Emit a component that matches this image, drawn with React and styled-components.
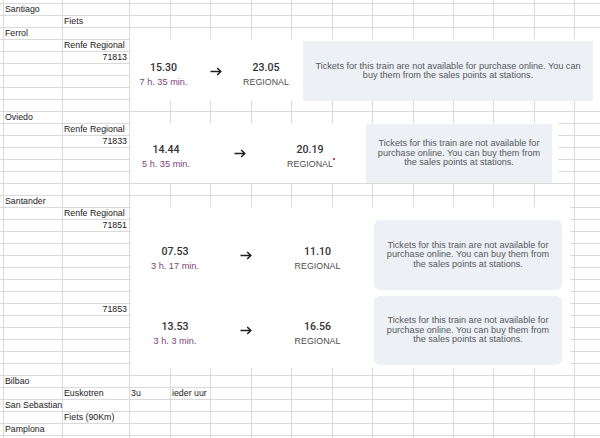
import React from 'react';
import styled, { createGlobalStyle } from 'styled-components';

const GlobalStyle = createGlobalStyle`
  html, body { margin: 0; padding: 0; background: #ffffff; }
  body { width: 600px; height: 438px; overflow: hidden; }
`;

const COLS = [4, 59, 67, 41, 40, 41, 40, 41, 40, 41, 40, 40, 41, 40, 41];
const ROWS = 38;

const CELLS = [
  { r: 0, c: 1, t: 'Santiago' },
  { r: 1, c: 2, t: 'Fiets' },
  { r: 2, c: 1, t: 'Ferrol' },
  { r: 3, c: 2, t: 'Renfe Regional' },
  { r: 4, c: 2, t: '71813', right: true },
  { r: 9, c: 1, t: 'Oviedo' },
  { r: 10, c: 2, t: 'Renfe Regional' },
  { r: 11, c: 2, t: '71833', right: true },
  { r: 16, c: 1, t: 'Santander' },
  { r: 17, c: 2, t: 'Renfe Regional' },
  { r: 18, c: 2, t: '71851', right: true },
  { r: 25, c: 2, t: '71853', right: true },
  { r: 31, c: 1, t: 'Bilbao' },
  { r: 32, c: 2, t: 'Euskotren' },
  { r: 32, c: 3, t: '3u' },
  { r: 32, c: 4, t: 'ieder uur' },
  { r: 33, c: 1, t: 'San Sebastian' },
  { r: 34, c: 2, t: 'Fiets (90Km)' },
  { r: 35, c: 1, t: 'Pamplona' },
];

const NOTICE =
  'Tickets for this train are not available for purchase online. You can buy them from the sales points at stations.';

const PASTES = [
  {
    x: 130, y: 39, w: 470, h: 62, pt: 2,
    cols: [67, 38, 62], ml: 6, cw: 290, r: 1,
    trains: [{ h: 60, dep: '15.30', dur: '7 h. 35 min.', arr: '23.05' }],
  },
  {
    x: 130, y: 123, w: 428, h: 60, pt: 1,
    cols: [72, 76, 64], ml: 24, cw: 186, r: 1,
    trains: [{ h: 59, dep: '14.44', dur: '5 h. 35 min.', arr: '20.19', mark: true }],
  },
  {
    x: 131, y: 207, w: 439, h: 161, pt: 13,
    cols: [88, 54, 89], ml: 12, cw: 188, r: 6,
    trains: [
      { h: 70, dep: '07.53', dur: '3 h. 17 min.', arr: '11.10' },
      { h: 69, dep: '13.53', dur: '3 h. 3 min.', arr: '16.56' },
    ],
  },
];

const Sheet = styled.div`
  position: relative;
  width: 600px;
  height: 438px;
  overflow: hidden;
  background: #ffffff;
  font-family: "Liberation Sans", Arial, sans-serif;
`;

const Grid = styled.div`
  display: grid;
  grid-template-columns: ${COLS.map((c) => `${c}px`).join(' ')};
  grid-template-rows: 4px repeat(${ROWS - 1}, 12px);
  width: max-content;
`;

const Cell = styled.div`
  box-sizing: border-box;
  border-right: 1px solid #dadada;
  border-bottom: 1px solid #dadada;
  padding: 0 2px 0 1px;
  font-size: 8.8px;
  line-height: 11px;
  color: #1a1a1a;
  white-space: nowrap;
  text-align: ${(p) => (p.$right ? 'right' : 'left')};
`;

const Paste = styled.div`
  position: absolute;
  left: ${(p) => p.$x}px;
  top: ${(p) => p.$y}px;
  width: ${(p) => p.$w}px;
  height: ${(p) => p.$h}px;
  box-sizing: border-box;
  padding-top: ${(p) => p.$pt}px;
  background: #ffffff;
  display: flex;
  flex-direction: column;
  gap: 6px;
  font-family: "Liberation Sans", Arial, sans-serif;
`;

const Train = styled.div`
  display: grid;
  grid-template-columns: ${(p) => p.$cols.map((c) => `${c}px`).join(' ')} auto;
  height: ${(p) => p.$h}px;
  align-items: center;
`;

const Stop = styled.div`
  display: flex;
  flex-direction: column;
  align-items: center;
  padding-top: 7px;
`;

const Time = styled.div`
  font-family: Roboto, "Liberation Sans", sans-serif;
  font-size: 10.6px;
  font-weight: 500;
  line-height: 14px;
  color: #333333;
`;

const Duration = styled.div`
  font-size: 9.2px;
  line-height: 14px;
  color: #7d3f78;
  white-space: nowrap;
`;

const Service = styled.div`
  position: relative;
  font-size: 8.8px;
  line-height: 14px;
  color: #4d4d4d;
  letter-spacing: 0.05px;
  &::after {
    content: '';
    display: ${(p) => (p.$mark ? 'block' : 'none')};
    position: absolute;
    right: -2px;
    top: 1px;
    width: 2px;
    height: 2px;
    border-radius: 50%;
    background: #d0021b;
  }
`;

const Arrow = styled.svg`
  justify-self: center;
  display: block;
`;

const Notice = styled.div`
  box-sizing: border-box;
  width: ${(p) => p.$w}px;
  height: 100%;
  margin-left: ${(p) => p.$ml}px;
  padding: 0 6px;
  background: #edf0f4;
  border-radius: ${(p) => p.$r}px;
  display: flex;
  align-items: center;
  justify-content: center;
  text-align: center;
  font-size: 9.1px;
  line-height: 9.5px;
  color: #555a60;
`;

function ArrowIcon() {
  return (
    <Arrow width="12" height="9" viewBox="0 0 12 9" fill="none">
      <path d="M0.5 4.5H10.6" stroke="#1e1e1e" strokeWidth="1.5" />
      <path d="M7.2 1L10.8 4.5L7.2 8" stroke="#1e1e1e" strokeWidth="1.5" strokeLinejoin="miter" />
    </Arrow>
  );
}

export default function App() {
  const map = {};
  CELLS.forEach((c) => {
    map[`${c.r + 1}-${c.c}`] = c;
  });
  const cells = [];
  for (let r = 0; r < ROWS; r += 1) {
    for (let c = 0; c < COLS.length; c += 1) {
      const d = map[`${r}-${c}`];
      cells.push(
        <Cell key={`${r}-${c}`} $right={d && d.right}>
          {d ? d.t : null}
        </Cell>
      );
    }
  }
  return (
    <>
      <GlobalStyle />
      <Sheet>
        <Grid>{cells}</Grid>
        {PASTES.map((p, i) => (
          <Paste key={i} $x={p.x} $y={p.y} $w={p.w} $h={p.h} $pt={p.pt}>
            {p.trains.map((t) => (
              <Train key={t.dep} $cols={p.cols} $h={t.h}>
                <Stop>
                  <Time>{t.dep}</Time>
                  <Duration>{t.dur}</Duration>
                </Stop>
                <ArrowIcon />
                <Stop>
                  <Time>{t.arr}</Time>
                  <Service $mark={t.mark}>REGIONAL</Service>
                </Stop>
                <Notice $w={p.cw} $ml={p.ml} $r={p.r}>
                  {NOTICE}
                </Notice>
              </Train>
            ))}
          </Paste>
        ))}
      </Sheet>
    </>
  );
}
